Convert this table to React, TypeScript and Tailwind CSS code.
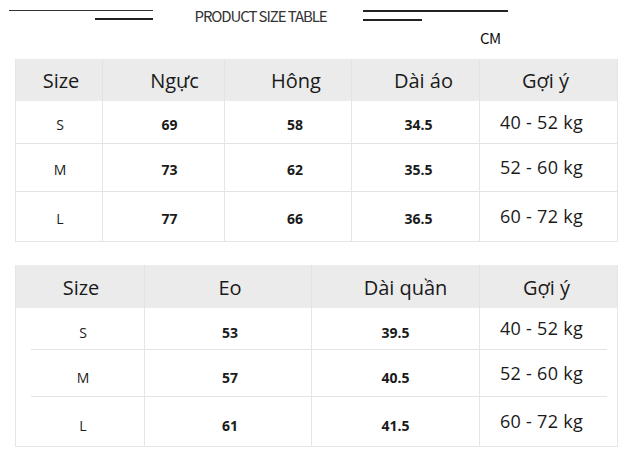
import React from "react";

const font = { fontFamily: '"Open Sans", "Noto Sans", sans-serif' };
const cjk = { fontFamily: '"Noto Sans CJK SC", "Noto Sans", sans-serif' };

type Row = string[];

const padMap: Record<string, string> = {
  "-7": "pr-[14px]",
  "-3": "pr-[6px]",
  "-2": "pr-[4px]",
  "0": "",
  "1": "pl-[2px]",
  "2": "pl-[4px]",
  "3": "pl-[6px]",
  "6": "pl-[12px]",
  "7": "pl-[14px]",
  "8": "pl-[16px]",
  "10": "pl-[20px]",
  "11": "pl-[22px]",
};

function Table({
  cols,
  head,
  rows,
  rowH,
  headH,
  headOff,
  bodyOff,
  inset,
  rowPt,
}: {
  cols: string;
  head: string[];
  rows: Row[];
  rowH: string[];
  headH: string;
  headOff: number[];
  bodyOff: number[];
  inset?: boolean;
  rowPt: string;
}) {
  return (
    <div className="ml-[15px] w-[603px] border-l border-r border-b border-[#e6e6e6]">
      <div className={`grid ${cols} ${headH} bg-[#ebebeb]`}>
        {head.map((h, i) => (
          <div
            key={i}
            className={`flex items-center justify-center pt-[2px] text-[20px] text-[#1a1a1a] ${padMap[String(headOff[i])]} ${
              i > 0 ? "border-l border-[#e2e2e2]" : ""
            }`}
          >
            {h}
          </div>
        ))}
      </div>
      {rows.map((r, ri) => (
        <React.Fragment key={ri}>
          {ri > 0 && (
            <div className={`h-px bg-[#e4e4e4] ${inset ? "ml-[15px] mr-[10px]" : ""}`} />
          )}
          <div className={`grid ${cols} ${rowH[ri]}`}>
            {r.map((c, ci) => {
              const last = ci === r.length - 1;
              const first = ci === 0;
              return (
                <div
                  key={ci}
                  className={`flex items-center justify-center text-[#1a1a1a] ${padMap[String(bodyOff[ci])]} ${
                    ci > 0 ? "border-l border-[#e6e6e6]" : ""
                  } ${
                    last
                      ? "text-[18px] tracking-[0.3px]"
                      : first
                      ? `text-[14px] ${rowPt}`
                      : `text-[14px] font-bold ${rowPt}`
                  }`}
                >
                  {c}
                </div>
              );
            })}
          </div>
        </React.Fragment>
      ))}
    </div>
  );
}

export default function App() {
  return (
    <div className="w-[635px] h-[457px] bg-white overflow-hidden" style={font}>
      <div className="flex h-[28px] items-start">
        <div className="ml-[9px] mt-[10px] flex w-[144px] flex-col items-end gap-[7px]">
          <div className="h-px w-full bg-[#333]" />
          <div className="h-[2px] w-[58px] bg-[#222]" />
        </div>
        <div
          className="mt-[5px] flex w-[210px] justify-center pl-[5px] text-[15px] leading-[22px] tracking-[-1.1px] text-[#333]"
          style={cjk}
        >
          PRODUCT SIZE TABLE
        </div>
        <div className="mt-[10px] flex w-[145px] flex-col items-start gap-[7px]">
          <div className="h-[1.5px] w-full bg-[#222]" />
          <div className="h-[2px] w-[59px] bg-[#222]" />
        </div>
      </div>
      <div className="flex h-[31px] items-start pl-[480px]">
        <div className="text-[15px] leading-[20px] tracking-[-0.6px] text-[#111]" style={cjk}>
          CM
        </div>
      </div>
      <Table
        cols="grid-cols-[86px_122px_127px_128px_1fr]"
        head={["Size", "Ngực", "Hông", "Dài áo", "Gợi ý"]}
        headOff={[2, 11, 8, 8, -3]}
        bodyOff={[1, 6, 7, 3, -7]}
        headH="h-[42px]"
        rowH={["h-[42px]", "h-[47px]", "h-[49px]"]}
        rowPt="pt-[4px]"
        rows={[
          ["S", "69", "58", "34.5", "40 - 52 kg"],
          ["M", "73", "62", "35.5", "52 - 60 kg"],
          ["L", "77", "66", "36.5", "60 - 72 kg"],
        ]}
      />
      <div className="h-[23px]" />
      <Table
        cols="grid-cols-[128px_167px_168px_1fr]"
        head={["Size", "Eo", "Dài quần", "Gợi ý"]}
        headOff={[1, 2, 10, -2]}
        bodyOff={[3, 2, 0, -7]}
        headH="h-[43px]"
        rowH={["h-[41px]", "h-[46px]", "h-[49px]"]}
        rowPt="pt-[8px]"
        inset
        rows={[
          ["S", "53", "39.5", "40 - 52 kg"],
          ["M", "57", "40.5", "52 - 60 kg"],
          ["L", "61", "41.5", "60 - 72 kg"],
        ]}
      />
    </div>
  );
}
